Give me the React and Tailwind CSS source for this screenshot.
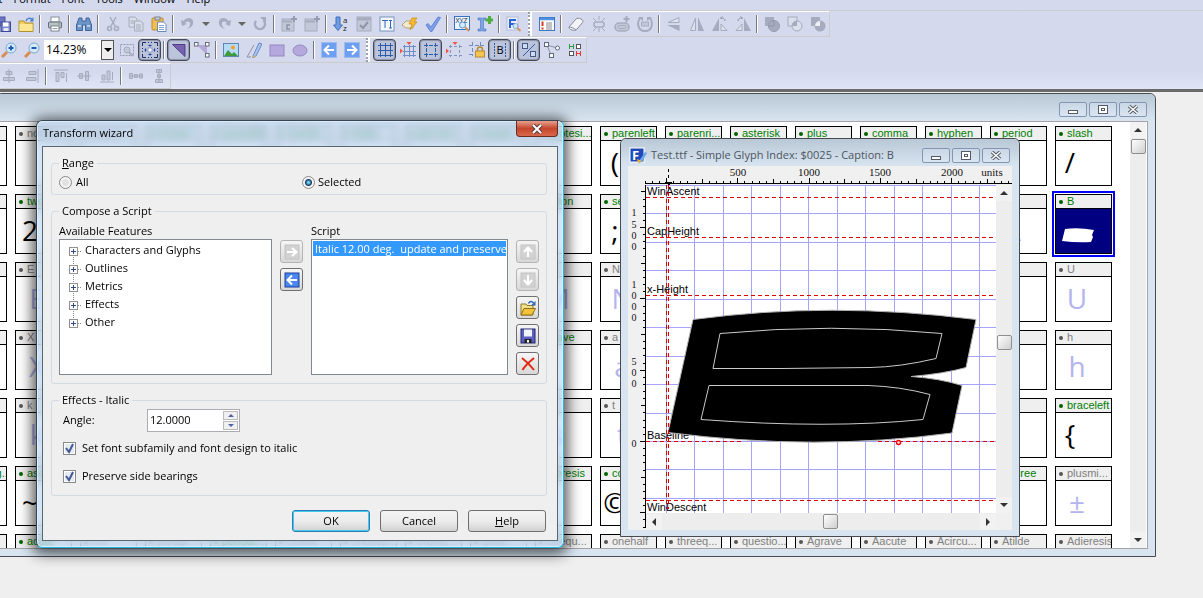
import { useState } from 'react';
import clsx from 'clsx';

const G = '#a6acbe';
const L = '#c3c8d8';

// 16x16 toolbar icons
const ICONS = {
  saveAll: <><rect x="1" y="1" width="9" height="9" fill="#6d78c4" stroke="#4a55a0" /><rect x="6" y="6" width="9.5" height="9.5" fill="#7a86d0" stroke="#3c468f" /><rect x="8" y="6.5" width="5.5" height="4" fill="#fff" /><rect x="8.5" y="12" width="5" height="3" fill="#e6e8f5" /></>,
  folder: <><path d="M1 5h5l1 2h8v8.5H1z" fill="#f2cf5c" stroke="#b08f2f" /><path d="M1.5 8h13v7h-13z" fill="#fbe694" /><path d="M8 5c1-3 4-3.500 6-1.500" fill="none" stroke="#4a80c8" strokeWidth="1.500" /><path d="M15.500 1v4.500h-4z" fill="#4a80c8" /></>,
  printer: <><rect x="4" y="1" width="8" height="5" fill="#fff" stroke="#8a8f99" /><rect x="1.500" y="6" width="13" height="6" rx="1" fill="#b9bec8" stroke="#666c78" /><rect x="4" y="10" width="8" height="5" fill="#fff" stroke="#7c828c" /><path d="M5.500 12.500h5" stroke="#999" /><rect x="11" y="7.500" width="2" height="1" fill="#4b4" /></>,
  find: <><path d="M3 2h3v3h4V2h3l2.500 7v5.500H9.500V9h-3v5.500H.5V9z" fill="#6d94c6" stroke="#3d649a" /><path d="M2 10h3M11 10h3" stroke="#cfe0f5" strokeWidth="1.500" /></>,
  cut: <><path d="M5 1l5 9M11 1L6 10" stroke={G} strokeWidth="1.500" /><circle cx="4.500" cy="12.500" r="2" fill="none" stroke={G} strokeWidth="1.500" /><circle cx="11.500" cy="12.500" r="2" fill="none" stroke={G} strokeWidth="1.500" /></>,
  copy: <><path d="M1 1h6l2 2v8H1z" fill="#d9dde9" stroke={G} /><path d="M6.500 5h6l2.500 2v8H6.500z" fill="#d9dde9" stroke={G} /><path d="M8 9h5M8 11h5M8 13h5M2.500 5H6M2.500 7H6" stroke={G} /></>,
  paste: <><rect x="1" y="2" width="11" height="12" rx="1" fill="#f0bf4c" stroke="#b98a2b" /><rect x="4" y="1" width="5" height="3" fill="#c9ced8" stroke="#7d838f" /><path d="M6.500 6h6l2.500 2.500v7H6.500z" fill="#fff" stroke="#6d87b5" /><path d="M8 9.500h5M8 11.500h5M8 13.500h5" stroke="#7fa8d8" /></>,
  undo: <path d="M1 4l1 6 5-2-2-1c3-3 6-1 5 2-.5 2-2 3-3 4 4-1 7-4 6-8C12 1 6 1 3.500 5z" fill={G} />,
  redo: <path d="M15 4l-1 6-5-2 2-1c-3-3-6-1-5 2 .5 2 2 3 3 4-4-1-7-4-6-8 1-4 7-4 9.500 0z" fill={G} />,
  repeat: <><path d="M11.500 4.500A5 5 0 1 1 4 5" fill="none" stroke={G} strokeWidth="2.500" /><path d="M8 1h6v6z" fill={G} /></>,
  boxPlus: <><rect x="1" y="3" width="12" height="12" fill={L} stroke={G} /><path d="M1 5.500h10" stroke={G} strokeWidth="2" /><path d="M9 9H6v4h3" fill="none" stroke="#8e94a8" strokeWidth="1.500" /><path d="M13 0v6M10 3h6" stroke="#969cb0" strokeWidth="2" /></>,
  boxNew: <><rect x="1" y="3" width="12" height="12" fill={L} stroke={G} /><path d="M1 5.500h10" stroke={G} strokeWidth="2" /><path d="M13 0v6M10 3h6" stroke="#969cb0" strokeWidth="2" /></>,
  sort: <><path d="M3 1h4v8h2.500L5 14.500.5 9H3z" fill="#6f9be0" stroke="#3f6fc0" /><text x="10" y="7" fontSize="8" fill="#222">a</text><text x="10" y="15" fontSize="8" fill="#222">z</text></>,
  winCheck: <><rect x="1" y="1" width="14" height="14" fill={L} stroke={G} /><path d="M1 3h14" stroke={G} strokeWidth="3" /><path d="M4 9l3 3 5-6" fill="none" stroke="#8e94a8" strokeWidth="2" /></>,
  textSize: <><rect x="1" y="1" width="14" height="14" fill="#f3f7ff" stroke="#7b92bd" /><path d="M3 4.500h6M6 4.500V12M11.500 5v7M10 4.500h3M10 12h3" stroke="#3467b8" /></>,
  tag: <><path d="M0 9l4-4h7v7H4z" fill="#f3e9cf" stroke="#b1a37c" /><path d="M10 2h5l-3 4h3l-7 8 2-6H7z" fill="#f9bb2e" stroke="#c98714" strokeWidth=".7" /></>,
  check: <path d="M1 9l2-1.500L6 11l7-10 2.500.5L7 15.500H5.500z" fill="#7f9fe8" stroke="#5379cf" strokeWidth=".8" />,
  xyz: <><rect x=".5" y=".5" width="15" height="13" fill="#eaf3ff" stroke="#3b71bd" /><text x="1.500" y="6.500" fontSize="7" fill="#223">XYZ</text><circle cx="8.500" cy="9" r="3" fill="#d5ecff" stroke="#5897d0" /><path d="M11 11l4 4" stroke="#d9925a" strokeWidth="2" /></>,
  insert: <><path d="M1 2h3.500l.5.500.5-.5H9v2H6.500v9H9v2H5.500l-.5-.5-.5.500H1v-2h2.500V4H1z" fill="#7fa5e4" stroke="#4470bd" strokeWidth=".6" /><path d="M12.500 0v8M8.500 4h8" stroke="#4fae40" strokeWidth="3" /></>,
  fontFind: <><rect x="1" y="1" width="11" height="13" fill="#e8eefb" stroke="#b4bcd2" /><path d="M4 12V4h6M4 8h5" stroke="#2b61d6" strokeWidth="2" fill="none" /><circle cx="9.500" cy="10" r="2.500" fill="#cfe5fa" stroke="#86a8cc" /><path d="M11.500 12l3 3" stroke="#d9925a" strokeWidth="2" /></>,
  list: <><rect x=".5" y="1.500" width="15" height="13" fill="#fff" stroke="#3c78c4" /><path d="M1 3h14" stroke="#4c92de" strokeWidth="2.500" /><path d="M3.500 5.500v4.500M3.500 11.500v2" stroke="#d43d1f" strokeWidth="2" /><path d="M7 7h6M7 9h6M7 11h6M7 13h6" stroke="#888" /></>,
  eraser: <path d="M1 11l7-8c1-1 3-1 5 0s2.500 2 1.500 3.500L9 13c-1 1.500-3 1.500-5 1S.5 12 1 11zM1 11c2 0 5 1 7 3" fill="#f3f4f8" stroke="#868b98" />,
  burst: <><rect x="3" y="6" width="10" height="5" rx="2" fill="none" stroke={G} strokeWidth="1.500" /><path d="M8 0v4M2 2l3 3M14 2l-3 3M8 12v4M2 15l3-3M14 15l-3-3" stroke={G} /></>,
  pillPlus: <><rect x="1" y="7" width="14" height="8" rx="4" fill={L} stroke={G} strokeWidth="1.500" /><rect x="4" y="9.500" width="8" height="3" rx="1.500" fill="none" stroke={G} /><path d="M12.500 0v6M9.500 3h6" stroke={G} strokeWidth="2" /></>,
  loop: <><path d="M3 2C0 6 0 15 8 15S16 6 13 2" fill="none" stroke={G} strokeWidth="2" /><rect x="4.500" y="6" width="7" height="4" fill={L} stroke={G} /><path d="M1 1h5v4zM15 1h-5v4z" fill={G} /></>,
  flipV: <><path d="M13 1.500v5H2z" fill="#dde1ec" stroke={G} /><path d="M13.500 9v6L1 9z" fill={G} /></>,
  flipH: <><path d="M6.500 2v12.500h-5z" fill="#dde1ec" stroke={G} /><path d="M9 1v14h6z" fill={G} /></>,
  rotL: <><path d="M7 2v13H0z" fill={G} /><path d="M9 8v6.500h6z" fill="#dde1ec" stroke={G} /><path d="M9 2.500c2-1 4 0 4 2.500M8 2.500l2.500-2" fill="none" stroke="#8e94a8" /></>,
  rotR: <><path d="M9 2v13h7z" fill={G} /><path d="M7 8v6.500H1z" fill="#dde1ec" stroke={G} /><path d="M7 2.500c-2-1-4 0-4 2.500M8 2.500l-2.500-2" fill="none" stroke="#8e94a8" /></>,
  union: <><rect x="1" y="1" width="9" height="9" fill={G} /><circle cx="10" cy="10" r="5.500" fill={G} stroke="#969cae" /><path d="M10 4.500V10H4.500" fill="none" stroke="#8f95a8" /></>,
  xor: <><rect x="1" y="1" width="9" height="9" fill="#dce0ec" stroke={G} /><circle cx="10" cy="10" r="5" fill="#dce0ec" stroke={G} /><path d="M10 5v5H5a5 5 0 0 1 5-5z" fill={G} /></>,
  diff: <><rect x="1" y="1" width="9" height="9" fill={G} /><circle cx="10" cy="10" r="5.500" fill={G} /><path d="M10 5v5H5a5 5 0 0 1 5-5z" fill="#eef0f6" /></>,
  zoomIn: <><circle cx="10" cy="6" r="5" fill="#d3ecfb" stroke="#7ba7cf" /><path d="M6 10l-5 5" stroke="#d98a4e" strokeWidth="3" /><path d="M7.500 6h5M10 3.500v5" stroke="#2458b8" strokeWidth="2" /></>,
  zoomOut: <><circle cx="10" cy="6" r="5" fill="#d3ecfb" stroke="#7ba7cf" /><path d="M6 10l-5 5" stroke="#d98a4e" strokeWidth="3" /><path d="M7.500 6h5" stroke="#2458b8" strokeWidth="2" /></>,
  marquee: <><rect x="1.500" y="2.500" width="13" height="11" fill="none" stroke="#959bae" strokeDasharray="2 1" /><circle cx="8" cy="8" r="3" fill={L} stroke={G} /><path d="M10 10l4 4" stroke={G} strokeWidth="2" /></>,
  fit: <><path d="M.5 4V.5H4M12 .5h3.500V4M15.500 12v3.500H12M4 15.500H.5V12M6 .5h1M9 .5h1M6 15.500h1M9 15.500h1M.5 6v1M.5 9v1M15.500 6v1M15.500 9v1" fill="none" stroke="#1d2f6b" /><rect x="6" y="6" width="4" height="4" fill="#fff" stroke="#8d9cc0" /><path d="M8 2.500v2M8 11.500v2M2.500 8h2M11.500 8h2M6.500 3.500h3M6.500 12.500h3M3.500 6.500v3M12.500 6.500v3" stroke="#1f3f9a" /></>,
  tri: <path d="M1.500 2.500h12.500v12z" fill="#7963b0" stroke="#4d3d8a" />,
  triNodes: <><path d="M3 3h10v10z" fill="#b3a8d6" /><g fill="#fff" stroke="#666b78"><rect x=".5" y=".5" width="3.500" height="3.500" /><rect x="11.500" y=".5" width="3.500" height="3.500" /><rect x="11.500" y="11.500" width="3.500" height="3.500" /></g></>,
  picture: <><rect x=".5" y="1.500" width="15" height="13" fill="#b5dbfa" stroke="#5f86ad" /><path d="M1 14l4-6 4 4 2-2 4 4z" fill="#3f9a3c" /><circle cx="10" cy="5.500" r="2" fill="#f7a021" /></>,
  pencil: <><path d="M7 14L13 1l3 1-6 12-3 2z" fill="#a9c5f2" stroke="#5273b5" strokeWidth=".8" /><path d="M7 13.500l3 1L7.500 16z" fill="#e3b257" /><path d="M1 15L8 3M1 15h4" stroke="#8d94a8" fill="none" /></>,
  rect: <rect x="1" y="3" width="14" height="11" fill="#b5a8dc" stroke="#9488c0" />,
  ellipse: <ellipse cx="8" cy="8.500" rx="7" ry="5.500" fill="#b5a8dc" stroke="#9488c0" />,
  left: <><rect x=".5" y=".5" width="15" height="15" fill="#6f9ff0" stroke="#9dbdf0" /><path d="M13 8H4M8 3.500L3.500 8 8 12.500" fill="none" stroke="#fff" strokeWidth="2" /></>,
  right: <><rect x=".5" y=".5" width="15" height="15" fill="#6f9ff0" stroke="#9dbdf0" /><path d="M3 8h9M8 3.500L12.500 8 8 12.500" fill="none" stroke="#fff" strokeWidth="2" /></>,
  grid: <path d="M3.500 1v14M8.500 1v14M13.500 1v14M1 3.500h15M1 8.500h15M1 13.500h15" stroke="#2d5da8" />,
  gridSnap: <><path d="M4.500 3v12M9.500 3v12M13.500 3v12M3 4.500h13M3 9.500h13M3 13.500h13" stroke="#6f8fc4" /><path d="M6.500 0h5L9 3zM0 6.500v5L3 9z" fill="#f0543f" /></>,
  guide: <><path d="M3.500 1v14M12.500 1v14M1 3.500h14M1 12.500h14" stroke="#2d5da8" strokeDasharray="4 1" /></>,
  guideSnap: <><path d="M4.500 3v12M13.500 3v12M3 4.500h13M3 13.500h13" stroke="#8296bd" strokeDasharray="3 2" /><path d="M6.500 0h5L9 3zM0 6.500v5L3 9z" fill="#f0543f" /></>,
  guideLock: <><path d="M3.500 0v14M11.500 0v6M0 3.500h15M0 12.500h6" stroke="#6f8fc4" strokeDasharray="4 2" /><path d="M8.500 9V7.500a2.500 2.500 0 0 1 5 0V9" fill="none" stroke="#b98a2b" strokeWidth="1.500" /><rect x="6.500" y="9" width="9" height="6" fill="#f5c451" stroke="#b98a2b" /></>,
  bracketB: <><path d="M2.500 1v14M13.500 1v14" stroke="#2d5da8" strokeDasharray="2 1" /><text x="4.500" y="12" fontSize="11" fill="#000">B</text></>,
  lines: <><rect x="1.500" y="1.500" width="5" height="5" fill="#cfdcf2" stroke="#44598a" /><rect x="9.500" y="9.500" width="5" height="5" fill="#cfdcf2" stroke="#44598a" /><path d="M2 14L14 2" stroke="#2d5da8" /></>,
  nodes: <><path d="M3 3l10 3M3 3l4 10" stroke="#8b92a4" /><g fill="#fff" stroke="#5f6a7c"><rect x=".5" y=".5" width="4" height="4" /><circle cx="13.500" cy="6" r="2" /><rect x="5.500" y="11.500" width="4" height="4" /></g></>,
  mirrorNodes: <><path d="M2.500 2v5M6.500 2v5M3 4.500h3" stroke="#2f9a42" /><rect x="9.500" y="2.500" width="4" height="4" fill="#fff" stroke="#555" /><rect x="2.500" y="9.500" width="4" height="4" fill="#fff" stroke="#555" /><path d="M13.500 9v5M9.500 9v5M10 11.500h3" stroke="#e53a2e" /></>,
  alignC: <path d="M8 1v14M5 3.500h6v3H5zM2.500 9.500h11v3h-11z" fill={L} stroke={G} />,
  alignR: <path d="M14 1v14M5 3.500h7v3H5zM2.500 9.500H12v3H2.500z" fill={L} stroke={G} />,
  alignT: <path d="M1 2h14M3 4.500h3v9H3zM8 4.500h3v5H8zM13.500 14V5" fill={L} stroke={G} />,
  alignM: <path d="M1 8h14M3.500 5.500h3v5h-3zM9.500 3.500h3v9h-3z" fill={L} stroke={G} />,
  alignB: <path d="M1 14h14M3 7h3v5H3zM8 3h3v9H8zM13.500 12V4" fill={L} stroke={G} />,
  distH: <path d="M1 8h14M1.500 5.500h3v5h-3zM6.500 6.500h3v3h-3zM11.500 6h3v4h-3z" fill={L} stroke={G} />,
  distV: <path d="M8 1v14M5.500 1.500h5v3h-5zM6.500 6.500h3v3h-3zM4.500 11.500h7v3h-7z" fill={L} stroke={G} />,
  up: <><rect x="1" y="1" width="14" height="14" fill="#d2d2d2" stroke="#c4c4c4" /><path d="M8 13V4M4 8l4-4.500L12 8" fill="none" stroke="#fff" strokeWidth="2" /></>,
  down: <><rect x="1" y="1" width="14" height="14" fill="#d2d2d2" stroke="#c4c4c4" /><path d="M8 3v9M4 8l4 4.500L12 8" fill="none" stroke="#fff" strokeWidth="2" /></>,
  addOff: <><rect x="1" y="1" width="14" height="14" fill="#d2d2d2" stroke="#c4c4c4" /><path d="M3 8h9M8 4l4.500 4L8 12" fill="none" stroke="#fff" strokeWidth="2" /></>,
  back: <><rect x="1" y="1" width="14" height="14" fill="#4a86f0" stroke="#1d3f9e" /><path d="M13 8H4M8 3.500L3.500 8 8 12.500" fill="none" stroke="#fff" strokeWidth="2" /></>,
  open: <><path d="M1 4h5l1 1.500h6V15H1z" fill="#f0e08a" stroke="#8f7a26" /><path d="M4 8.500h11.500L12 15H1z" fill="#f3c13a" stroke="#8f6f1a" /><path d="M8.500 3.500c1-2.500 3.500-2.500 5-.5" fill="none" stroke="#2f62b0" strokeWidth="1.500" /><path d="M15.500 1v4.500H11z" fill="#2f62b0" /></>,
  save: <><rect x="1" y="1" width="14" height="14" fill="#5a5fc0" stroke="#25286e" /><rect x="4" y="1.500" width="8" height="7" fill="#f2f4fc" /><rect x="4.500" y="11" width="7" height="4" fill="#222" /><rect x="7" y="12" width="2" height="2.500" fill="#fff" /></>,
  remove: <path d="M2 2c4 3 8 7 12 12M14 2C9 6 5 10 2.500 14" fill="none" stroke="#e32812" strokeWidth="2" />,
};

// '|' separator, ':' gripper, 'v' drop-down arrow, '*' pressed, 'zoom' combo box
const BAR1 = ['saveAll', 'folder', '|', 'printer', '|', 'find', '|', 'cut', 'copy', 'paste', '|', 'undo', 'v', 'redo', 'v', 'repeat', '|', 'boxPlus', 'boxNew', '|', 'sort', 'winCheck', 'textSize', 'tag', 'check', '|', 'xyz', 'insert', '|', 'fontFind', ':', 'list', '|', 'eraser', 'burst', 'pillPlus', 'loop', '|', 'flipV', 'flipH', 'rotL', 'rotR', '|', 'union', 'xor', 'diff'];
const BAR2 = ['zoomIn', 'zoomOut', 'zoom', 'marquee', '*fit', '|', '*tri', 'triNodes', '|', 'picture', 'pencil', 'rect', 'ellipse', '|', 'left', 'right', ':', '*grid', 'gridSnap', '*guide', 'guideSnap', 'guideLock', '*bracketB', '|', '*lines', 'nodes', 'mirrorNodes'];
const BAR3 = ['alignC', 'alignR', '|', 'alignT', 'alignM', 'alignB', '|', 'distH', 'distV'];

// [label, glyph]; a leading '-' marks a glyph the font doesn't have yet
const ROWS = [
  '-.null| -notdef| -space| exclam|! quotedbl|" numbe...|# dollar|$ percent|% amper...|& quotesi...|\' parenleft|( parenri...|) asterisk|* plus|+ comma|, hyphen|- period|. slash|/',
  'one|1 two|2 three|3 four|4 five|5 six|6 seven|7 eight|8 nine|9 colon|: semico...|; less|< equal|= greater|> question|? at|@ -A|A B|',
  '-D|D -E|E -F|F -G|G -H|H -I|I -J|J -K|K -L|L -M|M -N|N -O|O -P|P -Q|Q -R|R -S|S -T|T -U|U',
  '-W|W -X|X -Y|Y -Z|Z bracke...|[ backsl...|\\ bracke...|] asciici...|^ unders...|_ grave|` -a|a -b|b -c|c -d|d -e|e -f|f -g|g -h|h',
  '-j|j -k|k -l|l -m|m -n|n -o|o -p|p -q|q -r|r -s|s -t|t -u|u -v|v -w|w -x|x -y|y -z|z braceleft|{',
  'bracerig...|} asciitilde|~ -exclam...|¡ cent|¢ sterling|£ -curren...|¤ yen|¥ -broken...|¦ section|§ dieresis|¨ copyright|© -ordfe...|ª -guille...|« -logical...|¬ register...|® -macron|¯ degree|° -plusmi...|±',
  '-three...| acute| -mu| -paragr...| periodc...| -cedilla| -onesup...| -ordma...| -guille...| -onequ...| -onehalf| -threeq...| -questio...| -Agrave| -Aacute| -Acircu...| -Atilde| -Adieresis|',
].map(r => r.split(' ').map(c => c.split('|')));

function Icon({ name }) {
  return <svg width="16" height="16" viewBox="0 0 16 16" aria-hidden="true">{ICONS[name]}</svg>;
}

function Toolbar({ items, className }) {
  return (
    <div className={clsx('flex h-[26px] w-fit items-center border-t border-r border-b border-t-white border-r-[#ccc] border-b-[#ccc]', className)}>
      {items.map((it, i) => {
        if (it === '|') return <span key={i} className="mx-[2px] h-[18px] w-[2px] border-l border-l-[#777] bg-white" />;
        if (it === ':') return <span key={i} className="mx-[3px] h-[24px] w-[4px] border-l-2 border-dotted border-[#9a9fae] bg-white" />;
        if (it === 'v') return <button key={i} aria-label="More" className="flex w-[13px] justify-center"><span className="border-x-4 border-t-4 border-x-transparent border-t-[#666]" /></button>;
        if (it === 'zoom') return (
          <div key={i} className="relative mx-px w-[70px]">
            <select aria-label="Zoom" className="h-5 w-full appearance-none bg-white pl-[2px] text-[12px] leading-5 outline-none">
              <option>14.23%</option>
            </select>
            <span className="pointer-events-none absolute top-0 right-0 flex h-5 w-[13px] items-center justify-center border border-[#555] bg-[#eee]">
              <span className="border-x-4 border-t-4 border-x-transparent border-t-black" />
            </span>
          </div>
        );
        const on = it[0] === '*';
        const name = on ? it.slice(1) : it;
        return (
          <button key={i} aria-label={name} className={clsx('flex h-[22px] w-[23px] items-center justify-center', on && 'rounded border border-[#444958] bg-[#bcc4dc] shadow-[inset_0_0_1px_1px_#8d93a6]')}>
            <span className="shrink-0"><Icon name={name} /></span>
          </button>
        );
      })}
    </div>
  );
}

function WindowButtons() {
  const cls = 'flex h-[15px] w-7 items-center justify-center rounded-xs border border-[#8496b4] bg-gradient-to-b from-[#c9d7e6] to-[#d9e5f1]';
  return (
    <div className="flex gap-[2px]">
      <button aria-label="Minimize" className={cls}><svg width="12" height="9"><rect x="1.500" y="5.500" width="9" height="3" fill="#fff" stroke="#555b66" /></svg></button>
      <button aria-label="Maximize" className={cls}><svg width="12" height="9"><rect x="1.500" y=".5" width="9" height="8" fill="#fff" stroke="#555b66" /><rect x="4.500" y="3.500" width="3" height="2" fill="none" stroke="#555b66" /></svg></button>
      <button aria-label="Close" className={cls}><svg width="12" height="9"><path d="M2 1l8 7M10 1L2 8" stroke="#555b66" strokeWidth="3.500" /><path d="M2 1l8 7M10 1L2 8" stroke="#fff" strokeWidth="1.500" /></svg></button>
    </div>
  );
}

function Scrollbar({ horizontal, before, after }) {
  return (
    <div className={clsx('flex items-center bg-[#ededed]', horizontal ? 'h-[17px] w-full' : 'h-full w-4 flex-col')}>
      <button aria-label="Scroll back" className="flex size-4 shrink-0 items-center justify-center bg-[#f2f2f2]">
        <svg width="8" height="8"><path d={horizontal ? 'M6 0v8L2 4z' : 'M0 6h8L4 2z'} fill="#333" /></svg>
      </button>
      <span style={{ flexGrow: before }} />
      <span className="size-[15px] shrink-0 rounded-xs border border-[#8f8f8f] bg-gradient-to-br from-white to-[#cfcfcf]" />
      <span style={{ flexGrow: after }} />
      <button aria-label="Scroll forward" className="flex size-4 shrink-0 items-center justify-center bg-[#f2f2f2]">
        <svg width="8" height="8"><path d={horizontal ? 'M2 0v8l4-4z' : 'M0 2h8L4 6z'} fill="#333" /></svg>
      </button>
    </div>
  );
}

function GlyphCell({ label, glyph }) {
  const missing = label[0] === '-';
  const name = missing ? label.slice(1) : label;
  const selected = name === 'B';
  return (
    <div className={clsx('h-[60px] border border-black bg-white', selected && 'outline-2 outline-offset-1 outline-[#00f]')}>
      <div className={clsx('flex h-[14px] items-center gap-1 overflow-hidden border-b border-black bg-[#efefef] pl-[3px] font-[Liberation_Sans] text-[11px] whitespace-nowrap', missing ? 'text-[#808080]' : 'text-[#008000]')}>
        <span className={clsx('size-1 shrink-0 rounded-full', missing ? 'bg-[#555]' : 'bg-[#006400]')} />{name}
      </div>
      {selected ? (
        <div className="flex h-11 items-end bg-[#000080] pb-[10px] pl-[6px]">
          <svg width="32" height="15" viewBox="0 0 32 15"><path d="M3 1Q16-1 32 2L30 7l1 2-2 5Q15 15 0 13z" fill="#fff" /></svg>
        </div>
      ) : (
        <div className={clsx('h-11 overflow-hidden text-center text-[28px] leading-[42px]', missing ? 'w-[42px] text-[#b4b4ee]' : 'w-7 text-black')}>{glyph}</div>
      )}
    </div>
  );
}

function FontWindow() {
  return (
    <section className="absolute top-px right-[47px] -left-1 flex h-[464px] flex-col rounded-t-md border border-[#4a4a52] bg-[#d8e5f1]">
      <div className="flex h-[27px] items-center justify-end rounded-t-md bg-gradient-to-b from-[#b9c8d6] to-[#d8e5f1] pt-1 pr-2">
        <WindowButtons />
      </div>
      <div className="mr-[7px] mb-[7px] flex min-h-0 flex-1 border-t border-r border-b border-[#a3a3a8] bg-white pr-px">
        <div className="flex flex-1 justify-end overflow-hidden pt-1 pr-[18px]">
          <div className="grid shrink-0 grid-cols-[repeat(18,57px)] content-start gap-2">
            {ROWS.map((row, r) => row.map(([label, glyph], c) => <GlyphCell key={`${r}-${c}`} label={label} glyph={glyph} />))}
          </div>
        </div>
        <Scrollbar before={1} after={380} />
      </div>
    </section>
  );
}

// Ruler marks, ten per 500 units
const ticks = Array.from({ length: 52 }, (_, i) => i - 3);

function TopRuler() {
  return (
    <svg className="block w-full" height="19" viewBox="628 166 384 19" preserveAspectRatio="xMinYMin" shapeRendering="crispEdges">
      <path d="M646 183.500h366" stroke="#000" />
      {ticks.map(i => <path key={i} d={`M${Math.round(666 + i * 7.13)}.5 184v${i % 10 === 0 ? -6 : i % 5 === 0 ? -5 : -3}`} stroke="#000" />)}
      <path d="M668.500 169v12" stroke="#000" strokeDasharray="3 3" />
      <path d="M664 182h8l-3 3z" />
      <g fontFamily="Liberation Serif" fontSize="11" textAnchor="middle" fill="#111">
        <text x="738" y="176">500</text><text x="809" y="176">1000</text><text x="880" y="176">1500</text><text x="952" y="176">2000</text><text x="992" y="176">units</text>
      </g>
    </svg>
  );
}

function SideRuler() {
  const digits = [[216, '1'], [228, '5'], [239, '0'], [250, '0'], [288, '1'], [299, '0'], [310, '0'], [321, '0'], [365, '5'], [376, '0'], [387, '0'], [447, '0']];
  return (
    <svg className="block shrink-0" width="18" height="345" viewBox="628 185 18 345" shapeRendering="crispEdges">
      <path d="M645.500 185v343" stroke="#000" />
      {ticks.map(i => i - 10).map(i => <path key={i} d={`M646 ${Math.round(441 - i * 7.13)}.5h${i % 10 === 0 ? -6 : i % 5 === 0 ? -5 : -3}`} stroke="#000" />)}
      <g fontFamily="Liberation Serif" fontSize="10" textAnchor="middle" fill="#111">
        {digits.map(([y, d]) => <text key={y} x="634" y={y}>{d}</text>)}
      </g>
    </svg>
  );
}

function GlyphCanvas() {
  return (
    <svg className="block bg-white" width="350" height="328" viewBox="646 185 350 328">
      <g stroke="#a4a4fa" shapeRendering="crispEdges">
        {[666, 694, 723, 751, 780, 808, 837, 865, 894, 922, 951, 979].map(x => <path key={x} d={`M${x}.5 185v328`} />)}
        {[185, 213, 242, 270, 299, 327, 356, 384, 413, 441, 469, 498].map(y => <path key={y} d={`M646 ${y}.5h350`} />)}
      </g>
      <g fontFamily="Liberation Sans" fontSize="11" fill="#000">
        <text x="647" y="195">WinAscent</text><text x="647" y="235">CapHeight</text><text x="647" y="293">x-Height</text><text x="647" y="439">Baseline</text><text x="647" y="511">WinDescent</text>
      </g>
      <path stroke="#b0b0b0" d="M693 319.500Q830 301 976 319.500L966 367.500Q945 373.500 911 376.500Q940 378.500 962 385.500L952 433Q815 451.500 668 432.500Z" />
      <g stroke="#dd0000" strokeDasharray="4 3" shapeRendering="crispEdges">
        {[197, 237, 295, 500].map(y => <path key={y} d={`M646 ${y}.5h350`} />)}
        <path d="M646 441.500h95M878 441.500h118M666.500 185v324M668.500 185v324" />
      </g>
      <g fill="none" stroke="#c9c9c9">
        <path d="M720 333.500Q832 323 942 333.500L936 358.500Q900 367 870 367.500L782 368.500H713Z" />
        <path d="M709 385.500H868Q900 386.500 930 394.500L923 419.500Q830 429 701 419.500Z" />
      </g>
      <circle cx="898.500" cy="442.500" r="2" fill="#fff" stroke="#f00" strokeWidth="1.500" />
    </svg>
  );
}

function GlyphWindow() {
  return (
    <section className="absolute top-[46px] left-[620px] rounded-t-md border border-[#4a4a52] bg-[#d8e5f1] px-[7px] pb-[6px]">
      <div className="-mx-[7px] flex h-[27px] items-center rounded-t-md bg-gradient-to-b from-[#b9c8d6] to-[#d8e5f1] pt-[6px] pr-[9px] pl-2">
        <svg width="18" height="17" viewBox="0 0 18 17" aria-hidden="true">
          <rect x="1" y="1" width="14" height="14" fill="#1f49b8" stroke="#fff" />
          <text x="3" y="13" fontSize="13" fontWeight="700" fill="#fff">F</text>
          <path d="M10 14l6-9 2 1-5 9-3 1z" fill="#6aa5e8" /><path d="M8 12l5 2-4 2z" fill="#f2b531" />
        </svg>
        <h2 className="flex-1 pl-[4px] text-[#4c5560]">Test.ttf - Simple Glyph Index: $0025 - Caption: B</h2>
        <WindowButtons />
      </div>
      <div className="w-96 bg-[#f0f0f0]">
        <TopRuler />
        <div className="flex">
          <SideRuler />
          <div className="w-[350px]">
            <GlyphCanvas />
            <Scrollbar horizontal before={162} after={142} />
          </div>
          <div className="h-[328px]"><Scrollbar before={134} after={146} /></div>
        </div>
      </div>
    </section>
  );
}

function Group({ title, className, children }) {
  return (
    <fieldset className={clsx('min-w-0 rounded-[3px] border border-[#d0dbe5]', className)}>
      <legend className="h-4 px-[3px] leading-4">{title}</legend>
      {children}
    </fieldset>
  );
}

function IconButton({ icon, label, disabled }) {
  return (
    <button aria-label={label} disabled={disabled} className={clsx('flex size-[23px] items-center justify-center rounded-[3px] border bg-gradient-to-b from-[#f6f6f6] to-[#d8d8d8]', disabled ? 'border-[#b4b4b4]' : 'border-[#707070]')}>
      <Icon name={icon} />
    </button>
  );
}

function TransformDialog() {
  const [range, setRange] = useState('selected');
  const [italic, setItalic] = useState(true);
  const [keep, setKeep] = useState(true);
  const radio = 'size-[13px] appearance-none rounded-full border border-[#8a8a8a] bg-[#e2e2e2] shadow-[inset_0_0_0_2px_#f4f4f4] checked:bg-[radial-gradient(circle,#6cc5ee_0_1px,#12385c_3px,#f4f4f4_4px)] checked:shadow-none';
  const box = 'col-start-1 row-start-1 size-[13px] appearance-none border border-[#8a8a8a] bg-[#e6e9ee] shadow-[inset_0_0_0_1px_#fff]';
  const btn = 'h-[22px] w-[78px] rounded-[3px] border bg-gradient-to-b from-[#f3f3f3] via-[#ececec] to-[#d2d2d2]';

  return (
    <section role="dialog" aria-label="Transform wizard" className="absolute top-[28px] left-[36px] w-[528px] rounded-md border border-[#3a4450] border-r-[#25b4dc] border-b-[#25b4dc] bg-[#b8d4f4]/60 px-[5px] pb-[6px] shadow-[0_2px_14px_4px_rgba(0,0,0,0.65),inset_0_0_0_1px_rgba(220,245,255,0.8)] backdrop-blur-xs">
      <header className="flex h-[25px] items-start justify-between">
        <h1 className="pl-px leading-6">Transform wizard</h1>
        <button aria-label="Close" className="flex h-4 w-[42px] items-center justify-center rounded-b border border-t-0 border-[#6b2a22] bg-gradient-to-b from-[#e5a08f] via-[#c4452c] via-50% to-[#d9694c]">
          <svg width="12" height="10"><path d="M2 1l8 8M10 1L2 9" stroke="#5a3a3a" strokeWidth="4" /><path d="M2 1l8 8M10 1L2 9" stroke="#fff" strokeWidth="2" /></svg>
        </button>
      </header>
      <div className="border border-[#5b6673] bg-[#efefef] pt-2 pr-[10px] pb-2 pl-2">
        <Group title={<><u>R</u>ange</>} className="px-[7px] pb-px">
          <div className="flex h-[22px] items-center">
            <label className="flex w-[243px] items-center gap-1"><input type="radio" name="range" className={radio} checked={range === 'all'} onChange={() => setRange('all')} />All</label>
            <label className="flex items-center gap-[3px]"><input type="radio" name="range" className={radio} checked={range === 'selected'} onChange={() => setRange('selected')} />Selected</label>
          </div>
        </Group>

        <Group title="Compose a Script" className="mt-2 px-[7px] pt-1 pb-2">
          <div className="flex gap-2">
            <div className="w-[213px]">
              <div className="h-4 leading-4">Available Features</div>
              <ul className="h-[136px] border border-[#828790] bg-white pt-px pl-[9px]">
                {['Characters and Glyphs', 'Outlines', 'Metrics', 'Effects', 'Other'].map(t => (
                  <li key={t} className="flex h-[18px] items-center gap-1">
                    <svg width="12" height="18" className="shrink-0" shapeRendering="crispEdges">
                      <path d={t === 'Other' ? 'M4.500 0v9M9 10.500h3' : t[0] === 'C' ? 'M4.500 10v8M9 10.500h3' : 'M4.500 0v18M9 10.500h3'} stroke="#888" strokeDasharray="1 1" />
                      <rect x=".5" y="6.500" width="8" height="8" fill="#fff" stroke="#919191" /><path d="M2 10.500h5M4.500 8v5" stroke="#2f4a8c" />
                    </svg>
                    {t}
                  </li>
                ))}
              </ul>
            </div>
            <div className="flex flex-col gap-[5px] pt-[17px]">
              <IconButton icon="addOff" label="Add" disabled />
              <IconButton icon="back" label="Take back" />
            </div>
            <div className="min-w-0 flex-1">
              <div className="h-4 leading-4">Script</div>
              <ul className="h-[136px] border border-[#828790] bg-white p-px">
                <li className="h-[15px] overflow-hidden bg-[#3399ff] pl-[2px] leading-[15px] whitespace-pre text-white">Italic 12.00 deg.  update and preserve</li>
              </ul>
            </div>
            <div className="flex flex-col gap-[5px] pt-[17px]">
              <IconButton icon="up" label="Move up" disabled />
              <IconButton icon="down" label="Move down" disabled />
              <IconButton icon="open" label="Open script" />
              <IconButton icon="save" label="Save script" />
              <IconButton icon="remove" label="Remove" />
            </div>
          </div>
        </Group>

        <Group title="Effects - Italic" className="mt-2 px-[7px] pb-[7px]">
          <div className="flex flex-col gap-1 pl-1">
            <div className="flex h-6 items-center">
              <label htmlFor="angle" className="w-[84px]">Angle:</label>
              <div className="flex h-[23px] w-[93px] items-center border border-[#abadb3] bg-white pr-px">
                <input id="angle" defaultValue="12.0000" className="min-w-0 flex-1 pl-[2px] outline-none" />
                <div className="flex flex-col gap-px">
                  <button aria-label="Increase" className="flex h-[9px] w-[15px] items-center justify-center border border-[#bbb] bg-[#f0f0f0]"><span className="border-x-3 border-b-3 border-x-transparent border-b-[#4c62a8]" /></button>
                  <button aria-label="Decrease" className="flex h-[9px] w-[15px] items-center justify-center border border-[#bbb] bg-[#f0f0f0]"><span className="border-x-3 border-t-3 border-x-transparent border-t-[#4c62a8]" /></button>
                </div>
              </div>
            </div>
            {[['Set font subfamily and font design to italic', italic, setItalic], ['Preserve side bearings', keep, setKeep]].map(([t, v, set]) => (
              <label key={t} className="flex h-6 items-center gap-[6px]">
                <span className="grid">
                  <input type="checkbox" className={box} checked={v} onChange={e => set(e.target.checked)} />
                  {v && <svg width="13" height="13" className="pointer-events-none col-start-1 row-start-1"><path d="M3 6l3 4 4-8" fill="none" stroke="#3f5a99" strokeWidth="2" /></svg>}
                </span>
                {t}
              </label>
            ))}
          </div>
        </Group>

        <div className="mt-[14px] flex justify-end gap-[10px] pr-px">
          <button className={clsx(btn, 'border-[#2c7fb0] shadow-[inset_0_0_0_1px_#45c8f0]')}>OK</button>
          <button className={clsx(btn, 'border-[#707070]')}>Cancel</button>
          <button className={clsx(btn, 'border-[#707070]')}><u>H</u>elp</button>
        </div>
      </div>
    </section>
  );
}

export default function App() {
  return (
    <div className="flex min-h-screen flex-col overflow-hidden bg-[#efefef] font-['Open_Sans',sans-serif] text-[11px] text-black">
      <header className="border-b-3 border-[#6a6a6a] bg-gradient-to-b from-[#d4d9ed] from-80% to-[#e0e6f6]">
        <nav className="flex h-[11px] items-end gap-[11px] overflow-hidden border-b border-[#ccc] pb-[3px] leading-4">
          {['Edit', 'Format', 'Font', 'Tools', 'Window', 'Help'].map(m => <a key={m} href="#" className="first:-ml-[17px]">{m}</a>)}
        </nav>
        <Toolbar items={BAR1} className="-ml-[9px]" />
        <Toolbar items={BAR2} className="-ml-[3px]" />
        <Toolbar items={BAR3} className="-ml-[3px]" />
      </header>
      <main className="relative flex-1">
        <FontWindow />
        <GlyphWindow />
        <TransformDialog />
      </main>
    </div>
  );
}
